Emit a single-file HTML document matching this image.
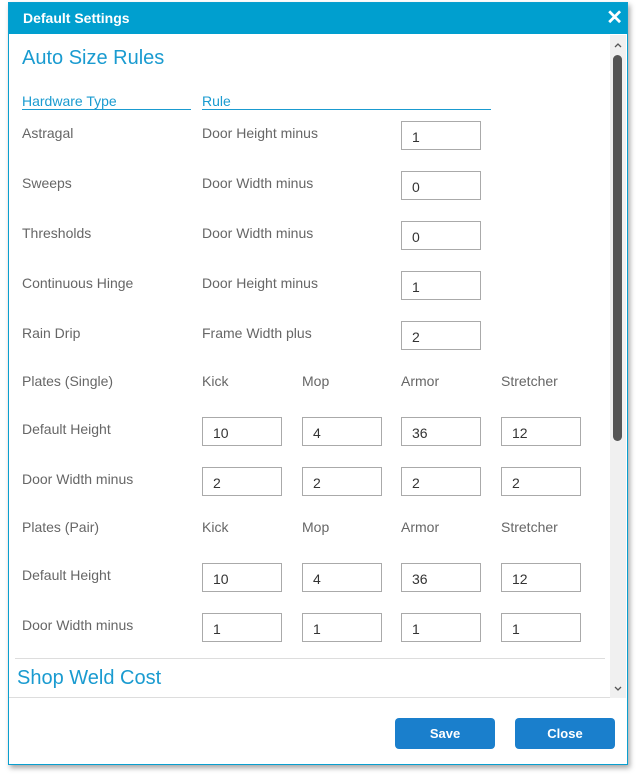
<!DOCTYPE html><html><head><style>
body{margin:0;background:#fff;width:637px;height:775px;position:relative;overflow:hidden;font-family:"Liberation Sans",sans-serif}
.dlg{position:absolute;left:8px;top:2px;width:618px;height:761px;border:1px solid #0a9fcf;background:#fff;box-shadow:2px 3px 5px rgba(0,0,0,.35)}
.tb{position:absolute;left:0;top:0;right:0;height:31px;background:#009fcf;color:#fff;font-weight:bold;font-size:14px;line-height:30px;padding-left:14px}
.x{position:absolute;right:4px;top:0;font-size:20px;font-weight:bold}
.a{position:absolute;font-size:14px;color:#666;white-space:nowrap}
.h{position:absolute;color:#1a9bd0;font-size:20px}
.i{position:absolute;width:80px;height:29px;border:1px solid #aaa;box-sizing:border-box;font-size:14px;color:#333;padding:7px 0 0 10px;line-height:16px}
.btn{position:absolute;top:715px;width:100px;height:31px;background:#1a7fcc;border-radius:4px;color:#fff;font-weight:bold;font-size:13px;text-align:center;line-height:31px}
</style></head><body>
<div class="dlg">
<div class="tb">Default Settings<span class="x">✕</span></div>
<div style="position:absolute;left:601px;top:32px;width:16px;height:663px;background:#f0f0f0"></div>
<div style="position:absolute;left:604px;top:52px;width:9px;height:386px;background:#555;border-radius:5px"></div>
<svg style="position:absolute;left:604px;top:38px" width="10" height="8"><path d="M2 6 L5 3 L8 6" stroke="#555" stroke-width="1.3" fill="none"/></svg>
<svg style="position:absolute;left:604px;top:682px" width="10" height="8"><path d="M2 2 L5 5 L8 2" stroke="#555" stroke-width="1.3" fill="none"/></svg>
<div style="position:absolute;left:0;top:694px;width:601px;border-top:1px solid #ddd"></div>
<div style="position:absolute;left:6px;top:655px;width:590px;border-top:1px solid #ddd"></div>
<div class="btn" style="left:386px">Save</div>
<div class="btn" style="left:506px">Close</div>
</div>
<div class="h" style="left:22px;top:47px">Auto Size Rules</div>
<div class="a" style="left:22px;top:93px;color:#1a9bd0">Hardware Type</div>
<div class="a" style="left:202px;top:93px;color:#1a9bd0">Rule</div>
<div style="position:absolute;left:22px;top:109px;width:169px;border-top:1px solid #1a9bd0"></div>
<div style="position:absolute;left:202px;top:109px;width:289px;border-top:1px solid #1a9bd0"></div>
<div class="a" style="left:22px;top:125px">Astragal</div><div class="a" style="left:202px;top:125px">Door Height minus</div><div class="i" style="left:401px;top:121px">1</div>
<div class="a" style="left:22px;top:175px">Sweeps</div><div class="a" style="left:202px;top:175px">Door Width minus</div><div class="i" style="left:401px;top:171px">0</div>
<div class="a" style="left:22px;top:225px">Thresholds</div><div class="a" style="left:202px;top:225px">Door Width minus</div><div class="i" style="left:401px;top:221px">0</div>
<div class="a" style="left:22px;top:275px">Continuous Hinge</div><div class="a" style="left:202px;top:275px">Door Height minus</div><div class="i" style="left:401px;top:271px">1</div>
<div class="a" style="left:22px;top:325px">Rain Drip</div><div class="a" style="left:202px;top:325px">Frame Width plus</div><div class="i" style="left:401px;top:321px">2</div>
<div class="a" style="left:22px;top:373px">Plates (Single)</div><div class="a" style="left:202px;top:373px">Kick</div><div class="a" style="left:302px;top:373px">Mop</div><div class="a" style="left:401px;top:373px">Armor</div><div class="a" style="left:501px;top:373px">Stretcher</div>
<div class="a" style="left:22px;top:421px">Default Height</div><div class="i" style="left:202px;top:417px">10</div><div class="i" style="left:302px;top:417px">4</div><div class="i" style="left:401px;top:417px">36</div><div class="i" style="left:501px;top:417px">12</div>
<div class="a" style="left:22px;top:471px">Door Width minus</div><div class="i" style="left:202px;top:467px">2</div><div class="i" style="left:302px;top:467px">2</div><div class="i" style="left:401px;top:467px">2</div><div class="i" style="left:501px;top:467px">2</div>
<div class="a" style="left:22px;top:519px">Plates (Pair)</div><div class="a" style="left:202px;top:519px">Kick</div><div class="a" style="left:302px;top:519px">Mop</div><div class="a" style="left:401px;top:519px">Armor</div><div class="a" style="left:501px;top:519px">Stretcher</div>
<div class="a" style="left:22px;top:567px">Default Height</div><div class="i" style="left:202px;top:563px">10</div><div class="i" style="left:302px;top:563px">4</div><div class="i" style="left:401px;top:563px">36</div><div class="i" style="left:501px;top:563px">12</div>
<div class="a" style="left:22px;top:617px">Door Width minus</div><div class="i" style="left:202px;top:613px">1</div><div class="i" style="left:302px;top:613px">1</div><div class="i" style="left:401px;top:613px">1</div><div class="i" style="left:501px;top:613px">1</div>
<div class="h" style="left:17px;top:667px">Shop Weld Cost</div>
</body></html>
